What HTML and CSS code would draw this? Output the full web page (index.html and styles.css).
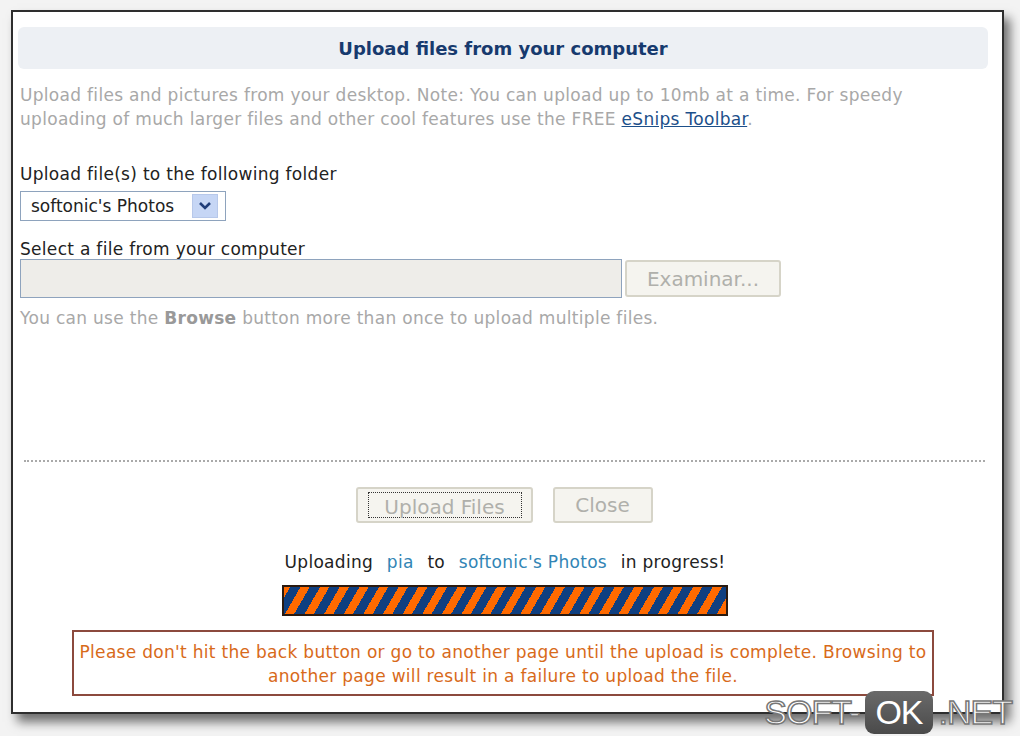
FILE: index.html
```html
<!DOCTYPE html>
<html lang="en">
<head>
  <meta charset="UTF-8" />
  <title>Upload files from your computer</title>
  <link rel="stylesheet" href="styles.css">
</head>
<body>

  <div class="frame">
    <div class="title-bar">
      <h1>Upload files from your computer</h1>
    </div>

    <p class="intro">
      Upload files and pictures from your desktop. Note: You can upload up to 10mb at a time. For speedy<br>
      uploading of much larger files and other cool features use the FREE <a href="#">eSnips Toolbar</a>.
    </p>

    <div class="field">
      <label>Upload file(s) to the following folder</label>
      <div class="select">
        <span class="select-text">softonic's Photos</span>
        <span class="select-arrow">
          <svg width="14" height="10" viewBox="0 0 14 10"><path d="M2 2 L7 7 L12 2" fill="none" stroke="#1f3d7a" stroke-width="2.6"/></svg>
        </span>
      </div>
    </div>

    <div class="field">
      <label>Select a file from your computer</label>
      <div class="file-row">
        <div class="file-input"></div>
        <button class="xp-btn browse" disabled>Examinar...</button>
      </div>
      <p class="hint">You can use the <b>Browse</b> button more than once to upload multiple files.</p>
    </div>

    <hr class="dots">

    <div class="actions">
      <button class="xp-btn upload" disabled><span class="focus">Upload Files</span></button>
      <button class="xp-btn close" disabled>Close</button>
    </div>

    <div class="progress">
      <p class="status">Uploading <span class="hl">pia</span> to <span class="hl">softonic's Photos</span> in progress!</p>
      <div class="bar"></div>
    </div>

    <div class="warning">
      Please don't hit the back button or go to another page until the upload is complete. Browsing to<br>
      another page will result in a failure to upload the file.
    </div>
  </div>

  <div class="watermark">SOFT-<span class="ok">OK</span>.NET</div>

</body>
</html>
```

FILE: styles.css
```css
html, body {
  margin: 0;
  padding: 0;
  background: #f3f3f3;
  font-family: 'DejaVu Sans', sans-serif;
  color: #222;
  overflow: hidden;
}

body {
  width: 1020px;
  height: 736px;
  position: relative;
}

.frame {
  margin: 10px 0 0 11px;
  width: 993px;
  height: 704px;
  border: 2px solid #2e2e2e;
  background: #fff;
  box-shadow: 6px 8px 10px rgba(0, 0, 0, 0.55);
  padding: 15px 14px 0 5px;
  box-sizing: border-box;
}

.title-bar {
  height: 42px;
  background: #edf0f4;
  border-radius: 6px;
  display: flex;
  align-items: center;
  justify-content: center;
}

.title-bar h1 {
  margin: 0;
  font-size: 18px;
  font-weight: bold;
  color: #173a6e;
}

.intro {
  margin: 14px 0 0 2px;
  font-size: 17px;
  line-height: 24px;
  color: #a8a8a8;
  letter-spacing: 0.3px;
  white-space: nowrap;
}

.intro a {
  color: #1c4f8a;
}

.field {
  margin: 32px 0 0 2px;
}

.field + .field {
  margin-top: 17px;
}

.field label {
  display: block;
  font-size: 17px;
  line-height: 22px;
  letter-spacing: 0.3px;
}

.select {
  margin-top: 6px;
  width: 206px;
  height: 30px;
  box-sizing: border-box;
  border: 1px solid #8ea3bd;
  display: flex;
  align-items: center;
  justify-content: space-between;
  padding: 0 7px 0 10px;
}

.select-text {
  font-size: 17px;
}

.select-arrow {
  width: 26px;
  height: 24px;
  background: #c6d6f5;
  border: 1px solid #b7c8ea;
  box-sizing: border-box;
  display: flex;
  align-items: center;
  justify-content: center;
}

.file-row {
  margin-top: -1px;
  display: flex;
  gap: 3px;
}

.file-input {
  width: 602px;
  height: 39px;
  box-sizing: border-box;
  background: #eeede9;
  border: 1px solid #8ea3bd;
}

.xp-btn {
  font-family: 'DejaVu Sans', sans-serif;
  font-size: 20px;
  color: #b0b0ab;
  background: #f5f4ef;
  border: 2px solid #d6d4c8;
  border-radius: 3px;
  padding: 0;
}

.browse {
  width: 156px;
  height: 37px;
  margin-top: 1px;
}

.hint {
  margin: 8px 0 0;
  font-size: 17px;
  line-height: 24px;
  color: #a8a8a8;
  letter-spacing: 0.3px;
}

.hint b {
  color: #999;
}

.dots {
  margin: 130px 0 0 6px;
  width: 961px;
  border: none;
  border-top: 2px dotted #aaa;
  height: 0;
}

.actions {
  margin-top: 25px;
  display: flex;
  justify-content: center;
  gap: 20px;
  padding-left: 2px;
}

.upload {
  width: 177px;
  height: 36px;
  display: flex;
  padding: 3px 9px 3px 10px;
}

.upload .focus {
  flex: 1;
  border: 1px dotted #333;
  line-height: 28px;
}

.close {
  width: 100px;
  height: 36px;
}

.progress {
  width: 446px;
  margin: 27px auto 0;
  position: relative;
  left: 2px;
}

.status {
  margin: 0 -10px;
  font-size: 17px;
  line-height: 24px;
  text-align: center;
  white-space: nowrap;
  letter-spacing: 0.3px;
}

.status .hl {
  color: #3285b5;
  margin: 0 8px;
}

.bar {
  margin-top: 11px;
  height: 31px;
  box-sizing: border-box;
  border: 2px solid #2a1a10;
  background: repeating-linear-gradient(-60deg, #ff6a00 0 8px, #0f3f80 8px 17px);
}

.warning {
  margin: 14px 0 0 54px;
  width: 862px;
  height: 66px;
  box-sizing: border-box;
  border: 2px solid #8c4a3d;
  color: #d86a1a;
  font-size: 17px;
  line-height: 24px;
  text-align: center;
  padding-top: 8px;
  white-space: nowrap;
  letter-spacing: 0.3px;
}

.watermark {
  position: absolute;
  right: 8px;
  bottom: 2px;
  font-family: 'Liberation Sans', sans-serif;
  font-size: 34px;
  color: #fff;
  -webkit-text-stroke: 1.5px #777;
  letter-spacing: -1px;
  display: flex;
  align-items: center;
}

.watermark .ok {
  background: linear-gradient(#6a6a6a, #4a4a4a);
  border-radius: 9px;
  padding: 2px 10px;
  margin: 0 6px;
  -webkit-text-stroke: 0;
}
```
